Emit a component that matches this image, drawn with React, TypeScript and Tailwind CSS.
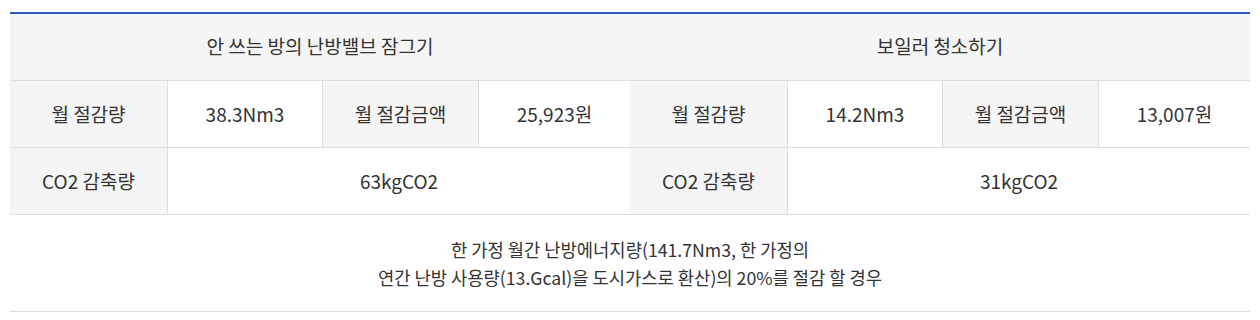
const font = { fontFamily: '"Noto Sans CJK KR", "Noto Sans", sans-serif' }

function Half({
  title,
  amount,
  money,
  co2,
}: {
  title: string
  amount: string
  money: string
  co2: string
}) {
  return (
    <div className="w-1/2 flex flex-col">
      <div className="h-[67px] bg-[#f5f5f5] border-b border-[#dddddd] flex items-center justify-center text-[19px] pb-[2px]">
        {title}
      </div>

      <div className="h-[67px] grid grid-cols-[157px_155px_156px_1fr] border-b border-[#dddddd] text-[19px]">
        <div className="bg-[#f5f5f5] flex items-center justify-center">월 절감량</div>
        <div className="bg-white border-l border-[#dddddd] flex items-center justify-center">
          {amount}
        </div>
        <div className="bg-[#f5f5f5] border-l border-[#dddddd] flex items-center justify-center">
          월 절감금액
        </div>
        <div className="bg-white border-l border-[#dddddd] flex items-center justify-center">
          {money}
        </div>
      </div>

      <div className="h-[67px] grid grid-cols-[157px_1fr] border-b border-[#dddddd] text-[19px]">
        <div className="bg-[#f5f5f5] flex items-center justify-center">CO2 감축량</div>
        <div className="bg-white border-l border-[#dddddd] flex items-center justify-center">
          {co2}
        </div>
      </div>
    </div>
  )
}

export default function App() {
  return (
    <div className="w-full h-[320px] bg-white px-[10px] pt-[12px] text-[#333333]" style={font}>
      <div className="border-t-2 border-[#2a5bbf]">
        <div className="flex">
          <Half title="안 쓰는 방의 난방밸브 잠그기" amount="38.3Nm3" money="25,923원" co2="63kgCO2" />
          <Half title="보일러 청소하기" amount="14.2Nm3" money="13,007원" co2="31kgCO2" />
        </div>

        <div className="h-[97px] border-b border-[#dddddd] flex flex-col items-center justify-center text-center text-[17.7px] leading-[28px]">
          <p>한 가정 월간 난방에너지량(141.7Nm3, 한 가정의</p>
          <p>연간 난방 사용량(13.Gcal)을 도시가스로 환산)의 20%를 절감 할 경우</p>
        </div>
      </div>
    </div>
  )
}
